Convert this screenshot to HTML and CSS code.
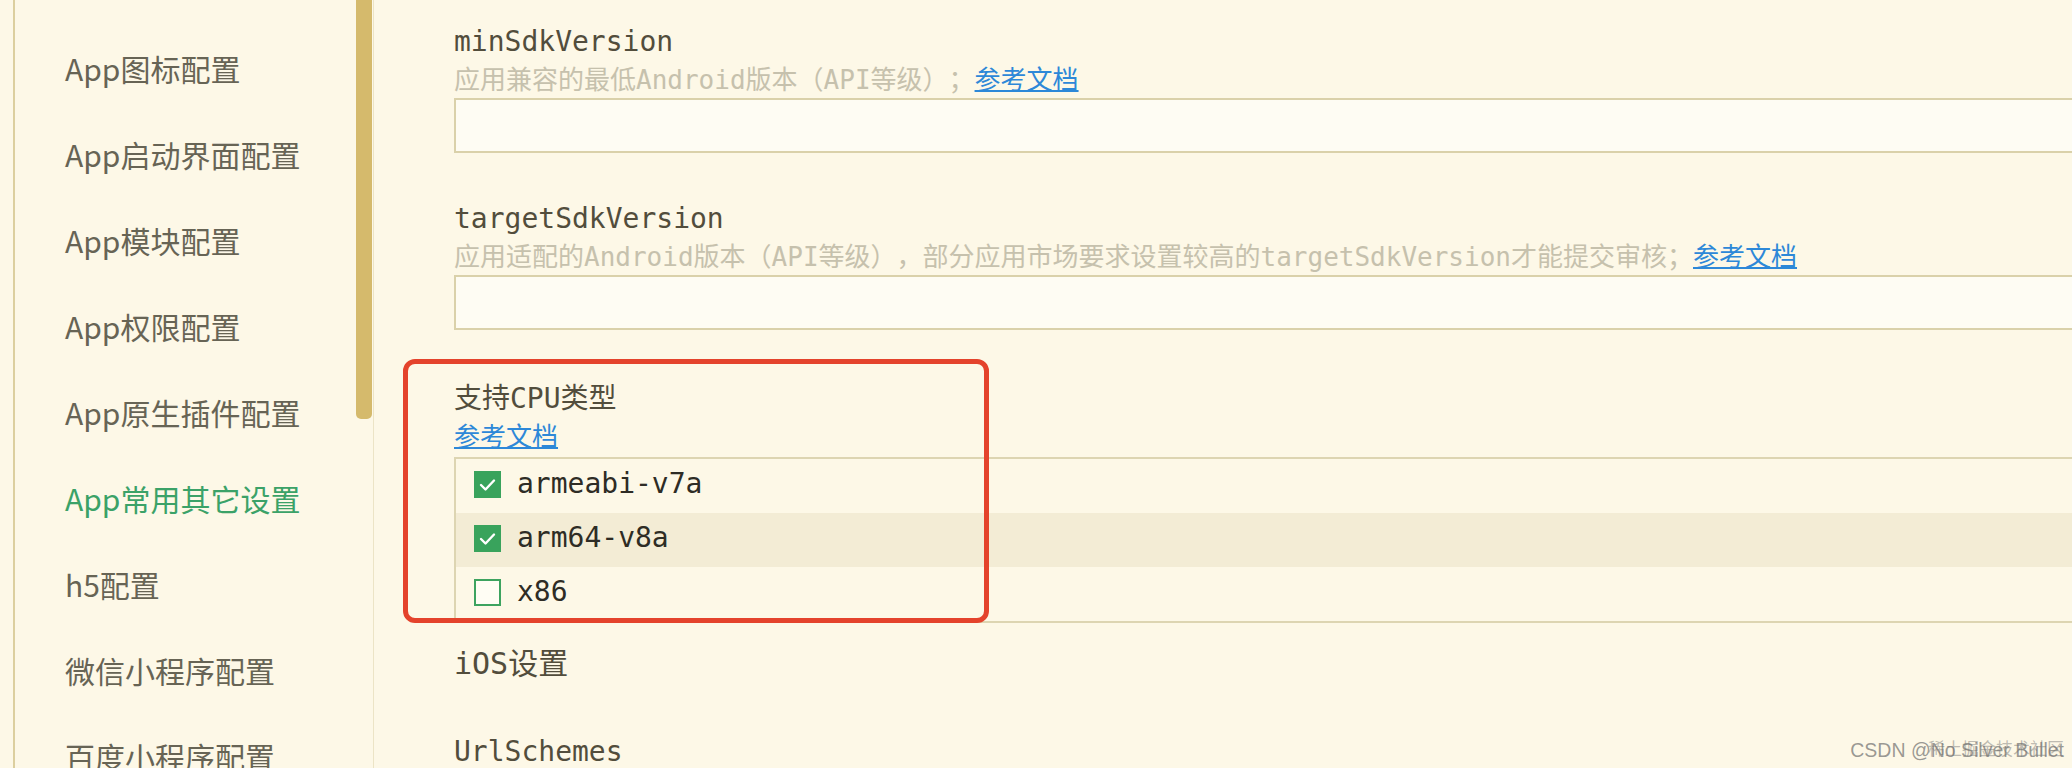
FILE: index.html
```html
<!DOCTYPE html>
<html lang="zh-CN">
<head>
<meta charset="utf-8">
<title>manifest.json</title>
<link rel="stylesheet" href="styles.css">
</head>
<body>
<div class="app">
  <div class="gutter"></div>
  <aside class="sidebar">
    <nav class="nav">
      <div class="nav-item">App图标配置</div>
      <div class="nav-item">App启动界面配置</div>
      <div class="nav-item">App模块配置</div>
      <div class="nav-item">App权限配置</div>
      <div class="nav-item">App原生插件配置</div>
      <div class="nav-item active">App常用其它设置</div>
      <div class="nav-item">h5配置</div>
      <div class="nav-item">微信小程序配置</div>
      <div class="nav-item">百度小程序配置</div>
    </nav>
    <div class="track"><div class="thumb"></div></div>
  </aside>
  <main class="main">
    <section class="field">
      <div class="label">minSdkVersion</div>
      <div class="desc">应用兼容的最低Android版本（API等级）；<a class="link">参考文档</a></div>
      <div class="input"></div>
    </section>
    <section class="field">
      <div class="label">targetSdkVersion</div>
      <div class="desc">应用适配的Android版本（API等级），部分应用市场要求设置较高的targetSdkVersion才能提交审核；<a class="link">参考文档</a></div>
      <div class="input"></div>
    </section>
    <section class="field field-cpu">
      <div class="label">支持CPU类型</div>
      <div class="desc"><a class="link">参考文档</a></div>
      <div class="checklist">
        <div class="row">
          <span class="box checked"><svg viewBox="0 0 27 27" width="27" height="27"><polyline points="7,14 11.5,18.5 20,9.5" fill="none" stroke="#ffffff" stroke-width="2.4" stroke-linecap="round" stroke-linejoin="round"/></svg></span>
          <span class="opt">armeabi-v7a</span>
        </div>
        <div class="row hover">
          <span class="box checked"><svg viewBox="0 0 27 27" width="27" height="27"><polyline points="7,14 11.5,18.5 20,9.5" fill="none" stroke="#ffffff" stroke-width="2.4" stroke-linecap="round" stroke-linejoin="round"/></svg></span>
          <span class="opt">arm64-v8a</span>
        </div>
        <div class="row">
          <span class="box"></span>
          <span class="opt">x86</span>
        </div>
      </div>
      <div class="annotation"></div>
    </section>
    <h3 class="section">iOS设置</h3>
    <section class="field field-url">
      <div class="label">UrlSchemes</div>
    </section>
  </main>
</div>
<div class="watermark">CSDN @No Silver Bullet<span class="wm-over">稀土掘金技术社区</span></div>
</body>
</html>
```
FILE: styles.css
```css
* { box-sizing: border-box; }
html, body { margin: 0; padding: 0; }
body {
  position: relative;
  width: 2072px;
  height: 768px;
  overflow: hidden;
  background: #fdf8e7;
}
.app {
  display: flex;
  height: 768px;
}
.gutter {
  width: 13px;
  flex: none;
}
.sidebar {
  width: 361px;
  flex: none;
  display: flex;
  border-left: 2px solid #dccf9f;
  border-right: 1px solid #ece4c6;
}
.nav {
  flex: 1;
  padding: 25px 0 0 50px;
  font-family: "Noto Sans CJK SC", sans-serif;
  font-size: 30px;
  line-height: 86px;
  color: #67645555;
  color: #676455;
}
.nav-item { white-space: nowrap; }
.nav-item.active { color: #3ba268; }
.track {
  width: 17px;
  flex: none;
}
.thumb {
  width: 16px;
  height: 419px;
  background: #d5ba6c;
  border-radius: 0 0 5px 5px;
}
.main {
  flex: 1;
  min-width: 0;
  padding: 25px 0 0 80px;
  font-family: "DejaVu Sans Mono", "Noto Sans CJK SC", monospace;
  text-spacing-trim: space-all;
}
.field {
  position: relative;
  width: 1700px;
}
.field + .field { margin-top: 49px; }
.field.field-cpu { margin-top: 52px; }
.label {
  font-size: 28px;
  line-height: 34px;
  color: #524d3c;
  white-space: nowrap;
}
.desc {
  margin-top: 4px;
  font-size: 26px;
  line-height: 34px;
  color: #c6c1ad;
  white-space: nowrap;
}
.link {
  color: #2d88d8;
  text-decoration: underline;
  text-decoration-thickness: 2px;
}
.input {
  margin-top: 1px;
  height: 55px;
  border: 2px solid #dad1aa;
  background: #fefcf3;
}
.checklist {
  margin-top: 3px;
  border: 2px solid #ddd5b2;
}
.row {
  display: flex;
  align-items: flex-start;
  height: 54px;
  padding: 7px 0 0 18px;
}
.row.hover { background: #f3ecd5; }
.box {
  width: 27px;
  height: 27px;
  margin-top: 5px;
  flex: none;
  border: 2px solid #3da35f;
  background: #fffdf4;
}
.box.checked {
  border: none;
  background: #39a35c;
}
.box svg { display: block; }
.opt {
  margin-left: 16px;
  font-size: 28px;
  line-height: 36px;
  color: #2e2c25;
}
.annotation {
  position: absolute;
  top: -23px;
  left: -51px;
  width: 586px;
  height: 264px;
  border: 5px solid #e4432c;
  border-radius: 12px;
  pointer-events: none;
}
.section {
  margin: 23px 0 0 0;
  font-size: 30px;
  line-height: 36px;
  font-weight: normal;
  color: #524d3c;
}
.field.field-url { margin-top: 53px; }
.watermark {
  position: absolute;
  right: 8px;
  top: 739px;
  font-family: "Liberation Sans", "Noto Sans CJK SC", sans-serif;
  font-size: 19.5px;
  line-height: 22px;
  color: rgba(110, 110, 110, 0.7);
  white-space: nowrap;
}
.wm-over {
  position: absolute;
  right: 0;
  top: 0;
  font-size: 17px;
  color: rgba(110, 110, 110, 0.45);
}
```
